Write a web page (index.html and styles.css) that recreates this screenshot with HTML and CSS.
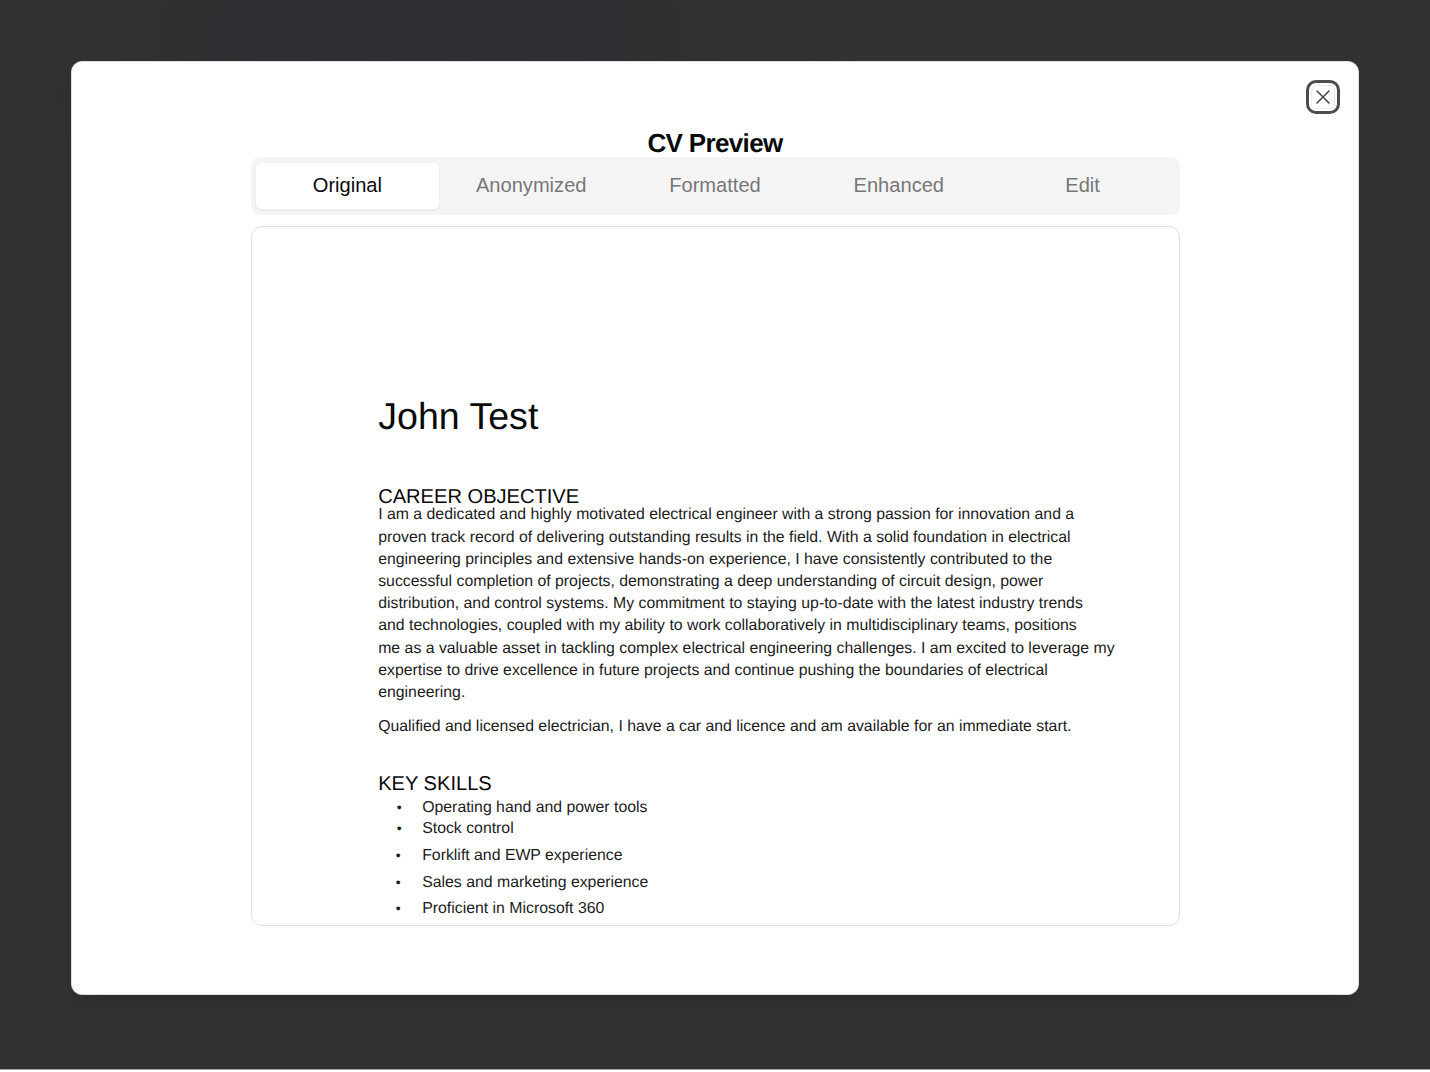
FILE: index.html
```html
<!DOCTYPE html>
<html lang="en">
<head>
<meta charset="utf-8">
<title>CV Preview</title>
<link rel="stylesheet" href="styles.css">
</head>
<body>
<div class="overlay">
  <main class="dialog" role="dialog" aria-labelledby="title">
    <button class="close" aria-label="Close">
      <svg width="14" height="14" viewBox="0 0 14 14" fill="none" stroke="#4a4a4a" stroke-width="1.6" stroke-linecap="round"><path d="M1 1 13 13M13 1 1 13"/></svg>
    </button>
    <h1 class="title" id="title">CV Preview</h1>
    <nav class="tabs">
      <button class="tab active">Original</button>
      <button class="tab">Anonymized</button>
      <button class="tab">Formatted</button>
      <button class="tab">Enhanced</button>
      <button class="tab">Edit</button>
    </nav>
    <article class="page">
      <h2 class="name">John Test</h2>
      <h3 class="heading">CAREER OBJECTIVE</h3>
      <p class="text">I am a dedicated and highly motivated electrical engineer with a strong passion for innovation and a<br>
proven track record of delivering outstanding results in the field. With a solid foundation in electrical<br>
engineering principles and extensive hands-on experience, I have consistently contributed to the<br>
successful completion of projects, demonstrating a deep understanding of circuit design, power<br>
distribution, and control systems. My commitment to staying up-to-date with the latest industry trends<br>
and technologies, coupled with my ability to work collaboratively in multidisciplinary teams, positions<br>
me as a valuable asset in tackling complex electrical engineering challenges. I am excited to leverage my<br>
expertise to drive excellence in future projects and continue pushing the boundaries of electrical<br>
engineering.</p>
      <p class="text qualified">Qualified and licensed electrician, I have a car and licence and am available for an immediate start.</p>
      <h3 class="heading skills-heading">KEY SKILLS</h3>
      <ul class="skills">
        <li class="tight">Operating hand and power tools</li>
        <li class="tight">Stock control</li>
        <li>Forklift and EWP experience</li>
        <li>Sales and marketing experience</li>
        <li>Proficient in Microsoft 360</li>
      </ul>
    </article>
  </main>
</div>
</body>
</html>
```
FILE: styles.css
```css
* { box-sizing: border-box; margin: 0; padding: 0; }
body { font-family: "Liberation Sans", Arial, sans-serif; background: #fff; overflow: hidden; text-rendering: geometricPrecision; }
button { font: inherit; border: 0; background: none; }
.overlay {
  height: 1070px;
  padding: 61px 71px 0;
  border-bottom: 1px solid #a09e9d;
  background: radial-gradient(ellipse 440px 240px at 420px 40px, #302d33 0%, #302e32 40%, #323232 100%) #323232;
}
.dialog {
  position: relative;
  width: 1288px;
  height: 934px;
  padding: 65px 178.5px 0;
  border: 1px solid #dedede;
  border-radius: 11px;
  background: #fff;
  box-shadow: 0 14px 20px -4px rgba(0, 0, 0, .1);
}
.close {
  position: absolute;
  top: 18px;
  right: 18px;
  display: grid;
  place-items: center;
  width: 34px;
  height: 34px;
  border: 3px solid #4d4d4d;
  border-radius: 10px;
  box-shadow: inset 0 0 0 2px #fff, inset 0 0 0 3px #ececec;
}
.title { height: 30px; font-size: 26px; line-height: 33px; letter-spacing: -.65px; text-align: center; color: #0a0a0a; }
.tabs {
  display: grid;
  grid-template-columns: repeat(5, 1fr);
  height: 57.5px;
  padding: 6px 5px 5.5px;
  border-radius: 9px;
  background: #f4f4f4;
}
.tab { font-size: 20.1px; line-height: 44px; padding-bottom: 2px; border-radius: 5px; color: #777; }
.active { background: #fff; color: #0a0a0a; box-shadow: 0 1px 3px rgba(0, 0, 0, .07); }
.page {
  height: 700px;
  margin-top: 11.5px;
  padding: 166px 0 0 126.7px;
  border: 1px solid #e2e2e2;
  border-radius: 11px;
  overflow: hidden;
  color: #0a0a0a;
  white-space: nowrap;
}
.name { font-size: 37.6px; font-weight: 400; line-height: 46px; }
.heading { margin-top: 46px; font-size: 20.1px; font-weight: 400; line-height: 24px; height: 19.4px; }
.text { font-size: 15.83px; line-height: 22.2px; color: #1c1c1c; }
.qualified { margin-top: 12px; }
.skills-heading { margin-top: 34px; height: 24.6px; }
.skills { list-style: none; font-size: 15.83px; line-height: 22px; color: #1c1c1c; }
.skills li { display: flex; height: 26.7px; }
.skills li::before { content: "•"; width: 26.5px; margin-left: 17.5px; font-size: 14px; line-height: 21px; }
.skills .tight { height: 21px; }
.skills .tight::before { width: 25.5px; margin-left: 18.5px; }
.skills .tight + li:not(.tight) { margin-top: 6px; }
```
